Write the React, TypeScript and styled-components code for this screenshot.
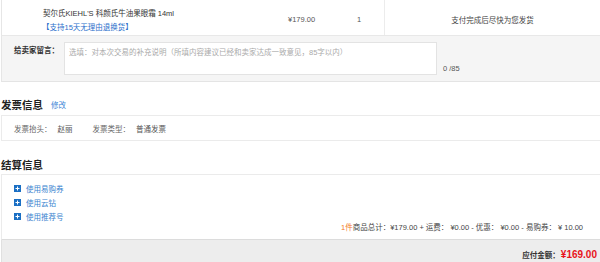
import styled, { createGlobalStyle } from "styled-components";

const GlobalStyle = createGlobalStyle`
  html, body {
    margin: 0;
    padding: 0;
    background: #fff;
  }
  body {
    font-family: "Liberation Sans", "Noto Sans CJK SC", sans-serif;
    font-size: 7.5px;
    color: #333;
  }
`;

const coupons = ["使用易购券", "使用云钻", "使用推荐号"];

export default function App() {
  return (
    <>
      <GlobalStyle />
      <Page>
        <ProductRow>
          <ProductCell>
            <ProductName>契尔氏KIEHL'S 科颜氏牛油果眼霜 14ml</ProductName>
            <ReturnLink>【支持15天无理由退换货】</ReturnLink>
          </ProductCell>
          <PriceCell>¥179.00</PriceCell>
          <QtyCell>1</QtyCell>
          <DeliveryCell>支付完成后尽快为您发货</DeliveryCell>
        </ProductRow>

        <MessageRow>
          <MessageLabel>给卖家留言：</MessageLabel>
          <MessageInput placeholder="选填：对本次交易的补充说明（所填内容建议已经和卖家达成一致意见，85字以内）" />
          <Counter>0 /85</Counter>
        </MessageRow>

        <SectionTitle $top={15}>
          发票信息
          <EditLink>修改</EditLink>
        </SectionTitle>
        <InvoiceBox>
          <InfoLabel>发票抬头：</InfoLabel>
          <InfoValue>赵丽</InfoValue>
          <InfoLabel $gap={20}>发票类型：</InfoLabel>
          <InfoValue>普通发票</InfoValue>
        </InvoiceBox>

        <SectionTitle $top={16}>结算信息</SectionTitle>
        <SettleBox>
          <CouponList>
            {coupons.map((c) => (
              <CouponItem key={c}>
                <PlusIcon />
                {c}
              </CouponItem>
            ))}
          </CouponList>
          <Summary>
            <Count>1件</Count>商品总计：¥179.00 + 运费： ¥0.00 - 优惠： ¥0.00 - 易购券： ¥ 10.00
          </Summary>
        </SettleBox>

        <TotalBar>
          <TotalLabel>应付金额：</TotalLabel>
          <TotalValue>¥169.00</TotalValue>
        </TotalBar>
      </Page>
    </>
  );
}

function PlusIcon() {
  return (
    <svg width="7" height="7" viewBox="0 0 7 7" style={{ marginRight: 5 }}>
      <rect width="7" height="7" fill="#1a6fc4" />
      <rect x="1.5" y="3" width="4" height="1" fill="#fff" />
      <rect x="3" y="1.5" width="1" height="4" fill="#fff" />
    </svg>
  );
}

const Page = styled.div`
  width: 600px;
  height: 262px;
  overflow: hidden;
  padding-left: 1px;
  box-sizing: border-box;
`;

const ProductRow = styled.div`
  display: grid;
  grid-template-columns: 286px 69px 27px 1fr;
  height: 35px;
  border-left: 1px solid #e6e6e6;
  border-bottom: 1px solid #e8e8e8;
  align-items: center;
`;

const ProductCell = styled.div`
  display: flex;
  flex-direction: column;
  padding-left: 41px;
  align-self: stretch;
  padding-top: 8px;
`;

const ProductName = styled.div`
  line-height: 12px;
  color: #333;
`;

const ReturnLink = styled.div`
  line-height: 12px;
  margin-top: 2px;
  margin-left: -1px;
  color: #2b6fcb;
`;

const PriceCell = styled.div`
  color: #555;
  padding-top: 3px;
`;

const QtyCell = styled.div`
  color: #555;
  padding-top: 3px;
`;

const DeliveryCell = styled.div`
  align-self: stretch;
  border-left: 1px solid #ececec;
  display: flex;
  align-items: center;
  justify-content: center;
  padding-top: 3px;
  color: #444;
`;

const MessageRow = styled.div`
  display: flex;
  align-items: flex-start;
  height: 46px;
  box-sizing: border-box;
  padding: 6px 0 0 12px;
  background: #f5f5f5;
  border-left: 1px solid #e6e6e6;
  border-bottom: 1px solid #e4e4e4;
`;

const MessageLabel = styled.div`
  width: 50px;
  padding-top: 2px;
  line-height: 14px;
  color: #333;
  font-weight: bold;
`;

const MessageInput = styled.textarea`
  width: 373px;
  height: 33px;
  box-sizing: border-box;
  margin: 0;
  padding: 5px 4px 3px;
  border: 1px solid #e3e3e3;
  background: #fff;
  resize: none;
  font-family: inherit;
  font-size: 7.5px;
  line-height: 9px;
  outline: none;

  &::placeholder {
    color: #aaa;
  }
`;

const Counter = styled.div`
  margin: 22px 0 0 6px;
  line-height: 10px;
  color: #555;
`;

const SectionTitle = styled.div<{ $top: number }>`
  margin-top: ${(p) => p.$top}px;
  display: flex;
  align-items: center;
  height: 14px;
  font-size: 10.5px;
  font-weight: bold;
  color: #222;
`;

const EditLink = styled.span`
  margin-left: 8px;
  font-size: 7.5px;
  font-weight: normal;
  color: #3a86d6;
`;

const InvoiceBox = styled.div`
  margin-top: 4px;
  display: flex;
  align-items: center;
  height: 24px;
  padding-left: 12px;
  border: 1px solid #ebebeb;
  border-right: none;
  color: #555;
`;

const InfoLabel = styled.span<{ $gap?: number }>`
  margin-left: ${(p) => p.$gap ?? 0}px;
  color: #666;
`;

const InfoValue = styled.span`
  margin-left: 6px;
  color: #555;
`;

const SettleBox = styled.div`
  margin-top: 3px;
  border: 1px solid #ebebeb;
  border-right: none;
  border-bottom-color: #dcdcdc;
  padding: 6px 17px 6px 12px;
  display: flex;
  flex-direction: column;
`;

const CouponList = styled.div`
  display: flex;
  flex-direction: column;
`;

const CouponItem = styled.div`
  display: flex;
  align-items: center;
  height: 14px;
  color: #3a84cf;
`;

const Summary = styled.div`
  margin-top: 0;
  align-self: flex-end;
  line-height: 10px;
  color: #444;
`;

const Count = styled.span`
  color: #f27a24;
`;

const TotalBar = styled.div`
  display: flex;
  justify-content: flex-end;
  align-items: center;
  height: 28px;
  padding-right: 3px;
  background: #ededed;
  border-left: 1px solid #e0e0e0;
`;

const TotalLabel = styled.span`
  font-weight: bold;
  color: #333;
  padding-top: 1px;
`;

const TotalValue = styled.span`
  margin-left: 1px;
  font-size: 10px;
  font-weight: bold;
  color: #e8141b;
`;
